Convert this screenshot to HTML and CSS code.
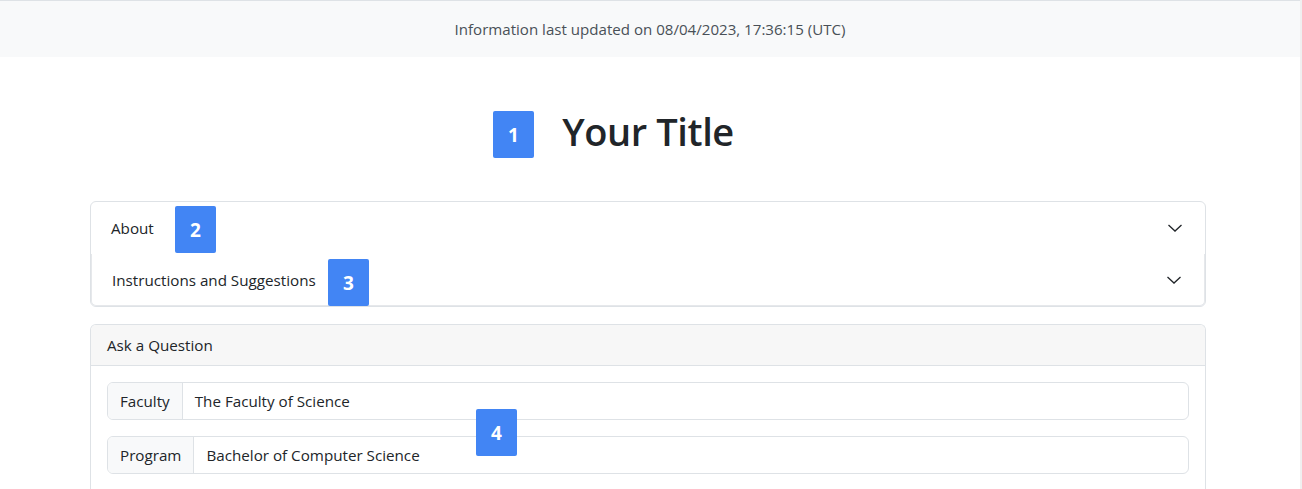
FILE: index.html
```html
<!DOCTYPE html>
<html lang="en">
<head>
<meta charset="utf-8">
<title>Your Title</title>
<link rel="stylesheet" href="styles.css">
</head>
<body>
<div class="page">
  <div class="updated">Information last updated on 08/04/2023, 17:36:15 (UTC)</div>
  <main class="content">
    <h1 class="title">Your Title</h1>
    <div class="accordion">
      <div class="acc-item">
        <span class="acc-label">About</span>
        <svg class="chev" viewBox="0 0 16 16" width="16" height="16"><polyline points="1.5,5 8,11 14.5,5" fill="none" stroke="#212529" stroke-width="1.3"/></svg>
      </div>
      <div class="acc-item acc-item-second">
        <span class="acc-label">Instructions and Suggestions</span>
        <svg class="chev" viewBox="0 0 16 16" width="16" height="16"><polyline points="1.5,5 8,11 14.5,5" fill="none" stroke="#212529" stroke-width="1.3"/></svg>
      </div>
    </div>
    <section class="card">
      <div class="card-header">Ask a Question</div>
      <div class="card-body">
        <div class="input-group">
          <span class="ig-label">Faculty</span>
          <span class="ig-value">The Faculty of Science</span>
        </div>
        <div class="input-group">
          <span class="ig-label">Program</span>
          <span class="ig-value">Bachelor of Computer Science</span>
        </div>
      </div>
    </section>
  </main>
  <span class="badge b1">1</span>
  <span class="badge b2">2</span>
  <span class="badge b3">3</span>
  <span class="badge b4">4</span>
</div>
</body>
</html>
```

FILE: styles.css
```css
html, body {
  margin: 0;
  padding: 0;
  background: #fff;
}
body {
  font-family: "Open Sans", "Noto Sans", "Liberation Sans", sans-serif;
  font-size: 15.2px;
  line-height: 24px;
  color: #212529;
  overflow: hidden;
  height: 489px;
}
.page {
  position: relative;
  height: 489px;
  border-right: 2px solid #f0f0f0;
}
.updated {
  border-top: 1px solid #dee2e6;
  background: #f8f9fa;
  height: 57px;
  box-sizing: border-box;
  display: flex;
  align-items: center;
  justify-content: center;
  color: #495057;
  font-size: 15.1px;
}
.content {
  margin-left: 90px;
  width: 1116px;
}
.title {
  margin: 50px 0 46px;
  text-align: center;
  font-size: 38px;
  line-height: 48px;
  font-weight: 600;
  letter-spacing: -0.4px;
}
.accordion {
  border: 1px solid #dee2e6;
  border-radius: 6px;
  display: flex;
  flex-direction: column;
}
.acc-item {
  height: 52px;
  display: flex;
  align-items: center;
  justify-content: space-between;
  padding: 0 22px 0 20px;
}
.acc-item-second {
  padding: 0 23px 0 21px;
  box-shadow: inset 1px 0 0 #e6e8eb, inset -1px 0 0 #e6e8eb, inset 0 -1px 0 #e6e8eb;
  border-radius: 0 0 5px 5px;
}
.chev {
  display: block;
}
.card {
  margin-top: 17px;
  border: 1px solid #dee2e6;
  border-bottom: none;
  border-radius: 6px 6px 0 0;
}
.card-header {
  background: #f7f7f7;
  border-bottom: 1px solid #dee2e6;
  height: 40px;
  display: flex;
  align-items: center;
  padding: 0 16px;
  border-radius: 5px 5px 0 0;
}
.card-body {
  padding: 16px;
  display: flex;
  flex-direction: column;
  gap: 16px;
}
.input-group {
  display: flex;
  height: 38px;
  border: 1px solid #dee2e6;
  border-radius: 6px;
  box-sizing: border-box;
}
.ig-label {
  display: flex;
  align-items: center;
  padding: 0 12px;
  background: #f8f9fa;
  border-right: 1px solid #dee2e6;
  border-radius: 5px 0 0 5px;
}
.ig-value {
  display: flex;
  align-items: center;
  padding: 0 12px;
}
.badge {
  position: absolute;
  width: 41px;
  height: 47px;
  background: #4285f4;
  color: #fff;
  border-radius: 2px;
  display: flex;
  align-items: center;
  justify-content: center;
  font-family: "Open Sans", sans-serif;
  font-weight: 700;
  font-size: 19px;
}
.b1 { left: 493px; top: 111px; }
.b2 { left: 175px; top: 206px; }
.b3 { left: 328px; top: 259px; }
.b4 { left: 476px; top: 409px; }
```
